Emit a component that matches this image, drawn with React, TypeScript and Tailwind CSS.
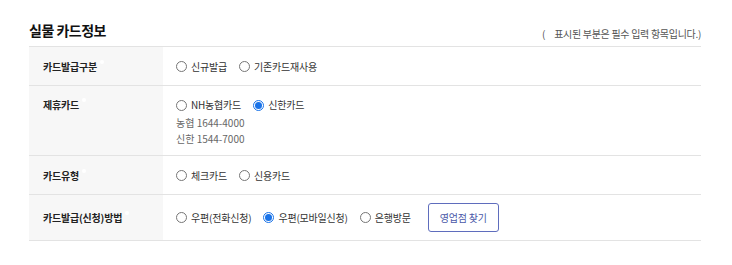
import React from 'react';

const font = { fontFamily: '"Noto Sans CJK KR", "Noto Sans", sans-serif' };

function Radio({ label, checked }: { label: string; checked?: boolean }) {
    return (
        <label className="flex items-center gap-[4px] text-[10px] text-[#333] tracking-[-0.2px]">
            {checked ? (
                <span className="w-[11px] h-[11px] rounded-full border border-[#1a73e8] flex items-center justify-center">
                    <span className="w-[7px] h-[7px] rounded-full bg-[#1a73e8]" />
                </span>
            ) : (
                <span className="w-[11px] h-[11px] rounded-full border border-[#767676] bg-white" />
            )}
            {label}
        </label>
    );
}

function Label({ children, top }: { children: React.ReactNode; top?: boolean }) {
    return (
        <div
            className={`w-[134px] shrink-0 bg-[#f7f7f7] pl-[14px] text-[10px] font-bold text-[#222] tracking-[-0.2px] ${
                top ? 'pt-[12px] leading-[14px]' : 'flex items-center'
            }`}
        >
            <span className="relative">
                {children}
                <span className="absolute -right-[7px] top-[1px] w-[4px] h-[4px] rounded-full bg-white" />
            </span>
        </div>
    );
}

export default function App() {
    return (
        <div className="w-[732px] h-[265px] bg-white pt-[21px] pl-[29px]" style={font}>
            <div className="w-[672px]">
                <div className="flex items-end justify-between pb-[6px]">
                    <h2 className="text-[14px] font-bold text-[#111] tracking-[-0.5px] leading-[19px]">실물 카드정보</h2>
                    <p className="text-[10px] text-[#555] tracking-[-0.3px] leading-[13px]">
                        (<span className="inline-block w-[9px]" />표시된 부분은 필수 입력 항목입니다.)
                    </p>
                </div>

                <div className="border-t border-[#e3e3e3]">
                    {/* 카드발급구분 */}
                    <div className="flex h-[39px] border-b border-[#e3e3e3]">
                        <Label>카드발급구분</Label>
                        <div className="flex items-center gap-[12px] pl-[13px]">
                            <Radio label="신규발급" />
                            <Radio label="기존카드재사용" />
                        </div>
                    </div>

                    {/* 제휴카드 */}
                    <div className="flex h-[70px] border-b border-[#e3e3e3]">
                        <Label top>제휴카드</Label>
                        <div className="pl-[13px] pt-[12px]">
                            <div className="flex items-center gap-[12px] leading-[14px]">
                                <Radio label="NH농협카드" />
                                <Radio label="신한카드" checked />
                            </div>
                            <p className="mt-[3px] text-[10px] text-[#666] leading-[16px]">농협 1644-4000</p>
                            <p className="text-[10px] text-[#666] leading-[16px]">신한 1544-7000</p>
                        </div>
                    </div>

                    {/* 카드유형 */}
                    <div className="flex h-[39px] border-b border-[#e3e3e3]">
                        <Label>카드유형</Label>
                        <div className="flex items-center gap-[12px] pl-[13px]">
                            <Radio label="체크카드" />
                            <Radio label="신용카드" />
                        </div>
                    </div>

                    {/* 카드발급(신청)방법 */}
                    <div className="flex h-[46px] border-b border-[#e3e3e3]">
                        <Label>카드발급(신청)방법</Label>
                        <div className="flex items-center gap-[12px] pl-[13px]">
                            <Radio label="우편(전화신청)" />
                            <Radio label="우편(모바일신청)" checked />
                            <Radio label="은행방문" />
                            <button className="ml-[5px] w-[71px] h-[29px] border border-[#5f6dbd] rounded-[3px] text-[10px] text-[#4a58a8] tracking-[-0.2px]">
                                영업점 찾기
                            </button>
                        </div>
                    </div>
                </div>
            </div>
        </div>
    );
}
